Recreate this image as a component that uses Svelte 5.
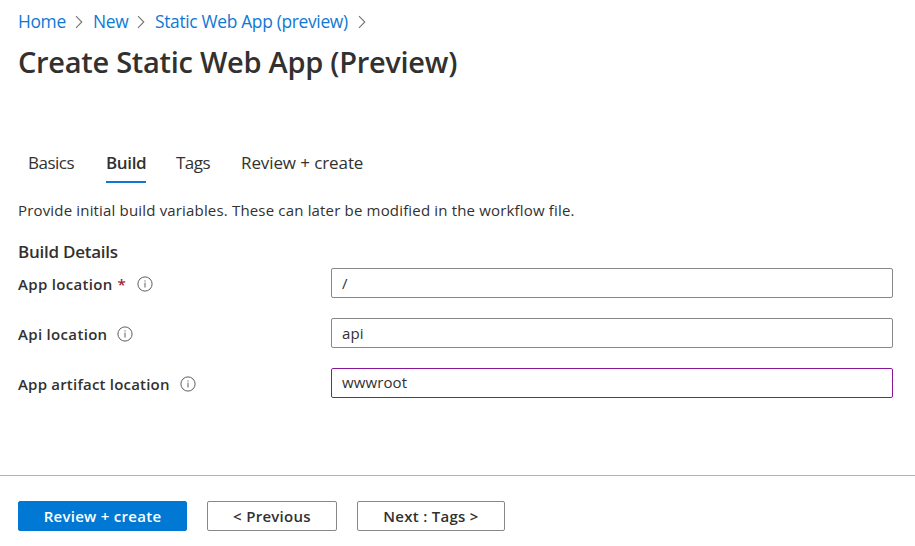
<script>
  const crumbs = ['Home', 'New', 'Static Web App (preview)'];
  const tabs = [
    { label: 'Basics', key: 'basics' },
    { label: 'Build', key: 'build' },
    { label: 'Tags', key: 'tags' },
    { label: 'Review + create', key: 'review' }
  ];
  let active = $state('build');
  let fields = $state([
    { id: 'app', label: 'App location', required: true, value: '/' },
    { id: 'api', label: 'Api location', required: false, value: 'api' },
    { id: 'artifact', label: 'App artifact location', required: false, value: 'wwwroot', edited: true }
  ]);
</script>

<main>
  <nav class="crumbs" aria-label="Breadcrumb">
    {#each crumbs as crumb, i}
      <a href="#top" class="crumb c{i}">{crumb}</a>
      <svg class="chevron" width="8" height="14" viewBox="0 0 8 14"><path d="M1 1.2 6.8 7 1 12.8" /></svg>
    {/each}
  </nav>

  <h1>Create Static Web App (Preview)</h1>

  <div class="tabs" role="tablist">
    {#each tabs as tab}
      <button
        class="tab {tab.key}"
        class:active={tab.key === active}
        role="tab"
        aria-selected={tab.key === active}
        onclick={() => (active = tab.key)}><span>{tab.label}</span></button>
    {/each}
  </div>

  <p>Provide initial build variables. These can later be modified in the workflow file.</p>

  <h2>Build Details</h2>

  {#each fields as field}
    <div class="field {field.id}">
      <div class="name">
        <label for={field.id}>{field.label}</label>
        {#if field.required}<span class="star">*</span>{/if}
        <svg class="info" width="16" height="16" viewBox="0 0 16 16">
          <circle cx="8" cy="8" r="7.1" />
          <path d="M8 6.7v4.8M8 4.4v1.2" />
        </svg>
      </div>
      <input id={field.id} class:edited={field.edited} bind:value={field.value} spellcheck="false" />
    </div>
  {/each}
</main>

<footer>
  <button class="primary"><span>Review + create</span></button>
  <button class="previous"><span>&lt; Previous</span></button>
  <button class="next"><span>Next : Tags &gt;</span></button>
</footer>

<style>
  :global(body) {
    background: #fff;
  }
  main,
  footer,
  button,
  input {
    font-family: 'Segoe UI', 'Open Sans', 'Noto Sans', sans-serif;
    color: #323130;
    box-sizing: border-box;
  }
  main {
    height: 475px;
    padding: 10px 22px 0 18px;
  }
  .crumbs {
    display: flex;
    align-items: center;
    height: 24px;
  }
  .crumb {
    color: #0f78d4;
    text-decoration: none;
    font-size: 17.4px;
    letter-spacing: -0.33px;
    line-height: 22px;
    height: 24px;
    white-space: nowrap;
  }
  .c0 { width: 47px; }
  .c1 { width: 34px; }
  .c2 { width: 193px; }
  .chevron {
    margin: 0 10px;
    flex: none;
  }
  .chevron path {
    fill: none;
    stroke: #76746f;
    stroke-width: 1.1;
  }
  h1 {
    margin: 9px 0 0;
    height: 38px;
    line-height: 38px;
    font-size: 29px;
    letter-spacing: -0.28px;
    font-weight: 600;
    white-space: nowrap;
  }
  .tabs {
    display: flex;
    margin: 67px 0 0 10px;
    height: 35px;
  }
  .tab {
    display: flex;
    align-items: flex-start;
    border: 0;
    padding: 0;
    background: none;
    font-size: 17px;
    line-height: 30px;
    height: 35px;
    text-align: left;
    white-space: nowrap;
    border-bottom: 2px solid transparent;
  }
  .tab.active {
    font-weight: 600;
    border-bottom-color: #0f78d4;
  }
  .basics { width: 47px; margin-right: 31px; letter-spacing: -0.5px; }
  .build { width: 40px; margin-right: 30px; letter-spacing: -0.35px; }
  .tags { width: 35px; margin-right: 30px; letter-spacing: -0.5px; }
  .review { letter-spacing: -0.1px; }
  p {
    margin: 15px 0 0;
    line-height: 24px;
    font-size: 15px;
    letter-spacing: 0.17px;
    white-space: nowrap;
  }
  h2 {
    margin: 18px 0 4px;
    font-size: 17px;
    letter-spacing: -0.25px;
    line-height: 24px;
    font-weight: 600;
  }
  .field {
    display: flex;
    height: 30px;
    margin-bottom: 20px;
  }
  .name {
    display: flex;
    align-items: center;
    width: 313px;
    height: 32px;
    font-size: 15px;
    font-weight: 600;
    letter-spacing: 0.2px;
    white-space: nowrap;
  }
  .app label { width: 95px; letter-spacing: 0.32px; }
  .api label { width: 89px; letter-spacing: 0.32px; }
  .artifact label { width: 152px; }
  .star {
    color: #a4262c;
    width: 10px;
    margin-left: 4.5px;
  }
  .info {
    margin-left: 10px;
    flex: none;
  }
  .star + .info {
    margin-left: 9.5px;
  }
  .info circle,
  .info path {
    fill: none;
    stroke: #605e5c;
    stroke-width: 1;
  }
  input {
    width: 562px;
    height: 30px;
    border: 1px solid #8a8886;
    border-radius: 2px;
    padding: 0 10px;
    font-size: 15px;
    letter-spacing: 0.12px;
    outline: none;
  }
  input.edited {
    border-color: #881798;
    padding-bottom: 2px;
  }
  footer {
    display: flex;
    gap: 20px;
    height: 71px;
    border-top: 1px solid #b3b0ad;
    padding: 25px 0 0 18px;
  }
  footer button {
    height: 30px;
    padding: 0;
    border: 1px solid #8a8886;
    border-radius: 2px;
    background: #fff;
    font-size: 15px;
    font-weight: 600;
    letter-spacing: 0.28px;
    white-space: nowrap;
  }
  footer .primary {
    width: 169px;
    background: #0078d4;
    border-color: #0078d4;
    color: #fff;
  }
  .previous { width: 130px; }
  .next { width: 148px; }
</style>
